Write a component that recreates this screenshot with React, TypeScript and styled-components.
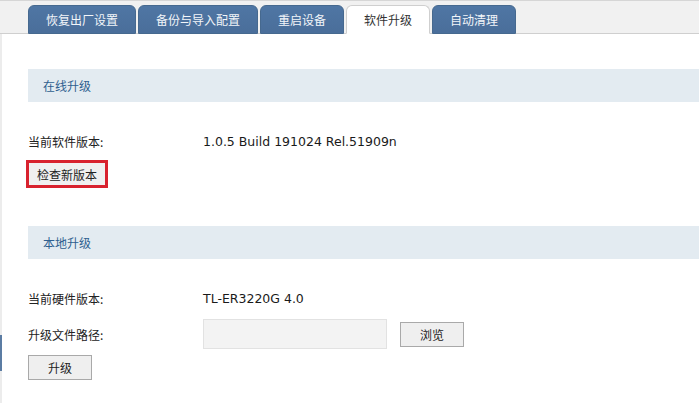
import { FC } from 'react';
import styled, { createGlobalStyle } from 'styled-components';

const GlobalStyle = createGlobalStyle`
  html, body {
    margin: 0;
    padding: 0;
    background: #ffffff;
  }
  body {
    font-family: "Noto Sans CJK SC", "DejaVu Sans", sans-serif;
    font-size: 12px;
    color: #222222;
  }
`;

const TABS = ['恢复出厂设置', '备份与导入配置', '重启设备', '软件升级', '自动清理'];
const ACTIVE_TAB = '软件升级';

const Page = styled.div`
  width: 699px;
  height: 403px;
  overflow: hidden;
  display: flex;
  flex-direction: column;
`;

const TabBar = styled.div`
  height: 28px;
  padding: 4px 0 0 28px;
  background: #f1f1f1;
  border-top: 1px solid #d6d6d6;
  border-bottom: 1px solid #cfcfcf;
  display: flex;
  align-items: flex-end;
  gap: 2px;
`;

const Tab = styled.div<{ active: boolean }>`
  box-sizing: border-box;
  padding: 0 17px;
  margin-bottom: -1px;
  display: flex;
  align-items: center;
  border-radius: 6px 6px 0 0;
  font-size: 12px;
  color: ${({ active }) => (active ? '#333333' : '#f2f5f9')};
  background: ${({ active }) => (active ? '#ffffff' : 'linear-gradient(#4f76a4, #4a6e9a)')};
  border: 1px solid ${({ active }) => (active ? '#cfcfcf' : '#46698f')};
  border-bottom-color: ${({ active }) => (active ? '#ffffff' : '#46698f')};
  height: 29px;
`;

const Body = styled.div`
  flex: 1;
  display: flex;
`;

const Rail = styled.div`
  width: 2px;
  background: #ececec;
  display: flex;
  flex-direction: column;
  padding-top: 301px;
`;

const RailMark = styled.div`
  width: 2px;
  height: 36px;
  background: #5b7ca3;
`;

const Content = styled.div`
  flex: 1;
  padding: 35px 0 0 26px;
`;

const SectionHeader = styled.div<{ top?: number }>`
  height: 33px;
  display: flex;
  align-items: center;
  padding-left: 15px;
  background: #e3ebf1;
  color: #2f5f8f;
  font-size: 12px;
  margin-top: ${({ top }) => top ?? 0}px;
`;

const Row = styled.div<{ top: number; height?: number }>`
  display: flex;
  align-items: center;
  height: ${({ height }) => height ?? 20}px;
  margin-top: ${({ top }) => top}px;
`;

const Label = styled.div`
  width: 175px;
  font-size: 12px;
  color: #222222;
`;

const Value = styled.div`
  font-family: "DejaVu Sans", "Noto Sans CJK SC", sans-serif;
  font-size: 12.5px;
  color: #1a1a1a;
`;

const FileInput = styled.div`
  width: 184px;
  height: 30px;
  box-sizing: border-box;
  background: #f3f3f3;
  border: 1px solid #e2e2e2;
`;

const Button = styled.button<{ width: number; height?: number }>`
  width: ${({ width }) => width}px;
  height: ${({ height }) => height ?? 25}px;
  box-sizing: border-box;
  padding: 0;
  background: #efefef;
  border: 1px solid #a9a9a9;
  font-family: "Noto Sans CJK SC", sans-serif;
  font-size: 12px;
  color: #222222;
  display: flex;
  align-items: center;
  justify-content: center;
`;

const BrowseButton = styled(Button)`
  margin-left: 13px;
`;

const Highlight = styled.div`
  width: 82px;
  height: 28px;
  margin-left: -2px;
  box-sizing: border-box;
  border: 3px solid #d8222e;
  display: flex;
`;

const CheckButton = styled(Button)`
  flex: 1;
  height: 100%;
  border: none;
  background: #f0f0f0;
`;

const App: FC = () => (
  <Page>
    <GlobalStyle />
    <TabBar>
      {TABS.map((t) => (
        <Tab key={t} active={t === ACTIVE_TAB}>
          {t}
        </Tab>
      ))}
    </TabBar>
    <Body>
      <Rail>
        <RailMark />
      </Rail>
      <Content>
        <SectionHeader>在线升级</SectionHeader>
        <Row top={29}>
          <Label>当前软件版本:</Label>
          <Value>1.0.5 Build 191024 Rel.51909n</Value>
        </Row>
        <Row top={9} height={28}>
          <Highlight>
            <CheckButton width={76}>检查新版本</CheckButton>
          </Highlight>
        </Row>
        <SectionHeader top={38}>本地升级</SectionHeader>
        <Row top={29}>
          <Label>当前硬件版本:</Label>
          <Value>TL-ER3220G 4.0</Value>
        </Row>
        <Row top={11} height={30}>
          <Label>升级文件路径:</Label>
          <FileInput />
          <BrowseButton width={64}>浏览</BrowseButton>
        </Row>
        <Row top={6} height={25}>
          <Button width={64}>升级</Button>
        </Row>
      </Content>
    </Body>
  </Page>
);

export default App;
